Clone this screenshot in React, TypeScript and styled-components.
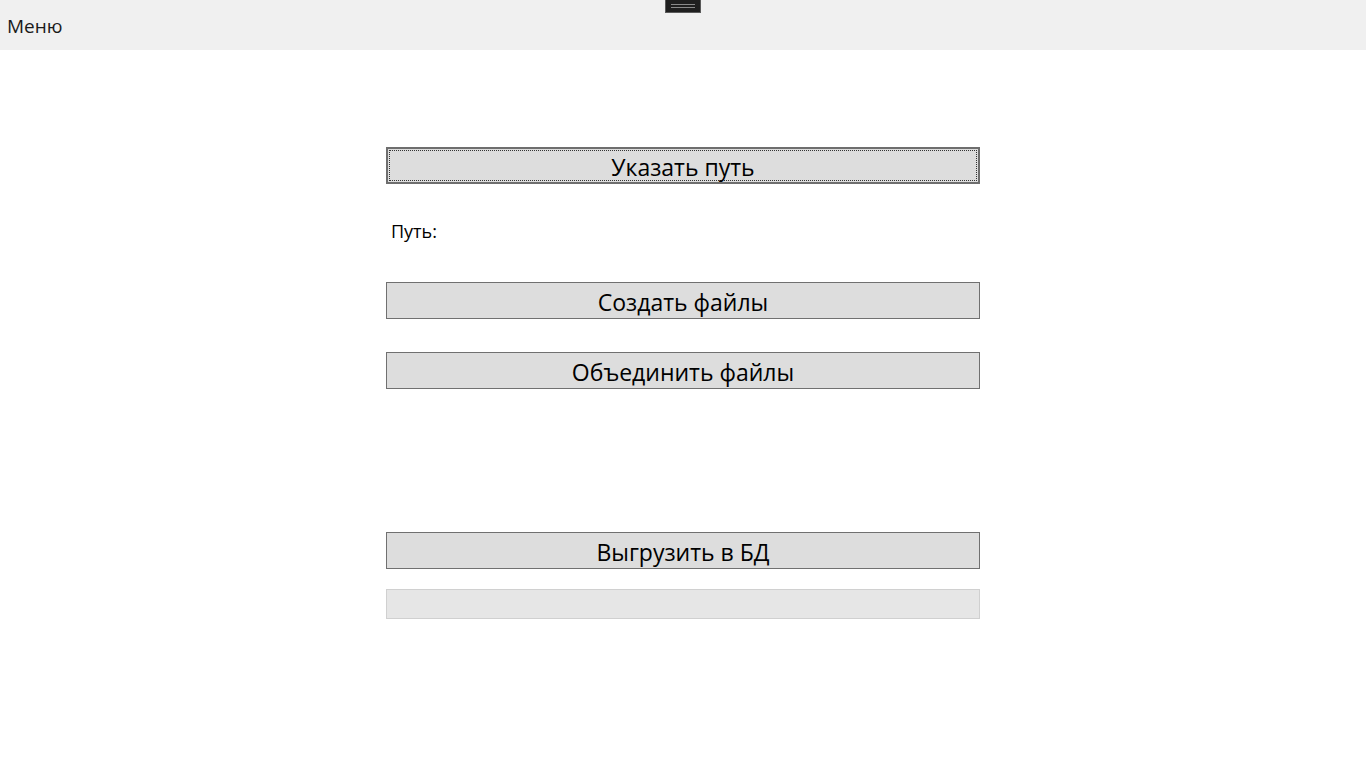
import React from "react";
import styled, { createGlobalStyle } from "styled-components";

const Global = createGlobalStyle`
  html, body { margin: 0; padding: 0; background: #ffffff; }
  body { font-family: "Open Sans", "Noto Sans", sans-serif; color: #000; }
`;

const Page = styled.div`
  position: relative;
  width: 1366px;
  height: 767px;
  background: #ffffff;
  overflow: hidden;
`;

const MenuBar = styled.div`
  height: 50px;
  background: #f0f0f0;
  display: flex;
  align-items: center;
  padding-left: 7px;
  box-sizing: border-box;
`;

const MenuItem = styled.span`
  font-size: 19px;
  color: #1a1a1a;
  line-height: 22px;
  margin-top: 2px;
`;

const Handle = styled.div`
  position: absolute;
  top: 0;
  left: 665px;
  width: 36px;
  height: 13px;
  box-sizing: border-box;
  background: #1f1f1f;
  border: 1px solid #5a5a5a;
  border-top: none;
  display: flex;
  flex-direction: column;
  align-items: center;
  justify-content: center;
  gap: 2px;
`;

const HandleLine = styled.div`
  width: 24px;
  height: 1px;
  background: #8a8a8a;
`;

const Content = styled.div`
  width: 594px;
  margin: 0 auto;
  display: flex;
  flex-direction: column;
`;

const Button = styled.button<{ $focused?: boolean; $top: number }>`
  box-sizing: border-box;
  width: 594px;
  height: 37px;
  margin-top: ${(p) => p.$top}px;
  padding: 0;
  background: #dddddd;
  border: ${(p) => (p.$focused ? "2px solid #6e6e6e" : "1px solid #707070")};
  font-family: "Open Sans", "Noto Sans", sans-serif;
  font-size: 23px;
  color: #000;
  display: flex;
  align-items: center;
  justify-content: center;
  position: relative;
  cursor: default;
`;

const FocusRing = styled.span`
  position: absolute;
  inset: 1px;
  border: 1px dotted #333;
  pointer-events: none;
`;

const ButtonText = styled.span`
  position: relative;
  top: 1px;
`;

const PathLabel = styled.div`
  margin-top: 36px;
  padding-left: 5px;
  font-size: 18px;
  line-height: 22px;
  color: #000;
`;

const Progress = styled.div`
  box-sizing: border-box;
  width: 594px;
  height: 30px;
  margin-top: 20px;
  background: #e6e6e6;
  border: 1px solid #d0d0d0;
`;

export default function App() {
  return (
    <Page>
      <Global />
      <MenuBar>
        <MenuItem>Меню</MenuItem>
      </MenuBar>
      <Handle>
        <HandleLine />
        <HandleLine />
      </Handle>
      <Content>
        <Button $focused $top={97}>
          <FocusRing />
          <ButtonText>Указать путь</ButtonText>
        </Button>
        <PathLabel>Путь:</PathLabel>
        <Button $top={40}>
          <ButtonText>Создать файлы</ButtonText>
        </Button>
        <Button $top={33}>
          <ButtonText>Объединить файлы</ButtonText>
        </Button>
        <Button $top={143}>
          <ButtonText>Выгрузить в БД</ButtonText>
        </Button>
        <Progress />
      </Content>
    </Page>
  );
}
